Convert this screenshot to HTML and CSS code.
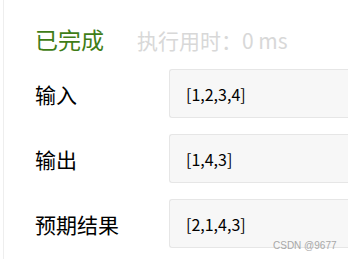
FILE: index.html
```html
<!DOCTYPE html>
<html lang="zh-CN">
<head>
<meta charset="utf-8">
<link rel="stylesheet" href="styles.css">
</head>
<body>
<div class="panel">
  <div class="header">
    <span class="status">已完成</span>
    <span class="time">执行用时：0 ms</span>
  </div>
  <div class="row">
    <div class="label">输入</div>
    <div class="box">[1,2,3,4]</div>
  </div>
  <div class="row">
    <div class="label">输出</div>
    <div class="box">[1,4,3]</div>
  </div>
  <div class="row">
    <div class="label">预期结果</div>
    <div class="box">[2,1,4,3]<span class="wm">CSDN @9677</span></div>
  </div>
</div>
</body>
</html>
```
FILE: styles.css
```css
html, body {
  margin: 0;
  padding: 0;
  background: #ffffff;
}
body {
  width: 348px;
  height: 259px;
  overflow: hidden;
  font-family: "Noto Sans CJK SC", "Noto Sans", sans-serif;
}
.panel {
  margin-left: 3px;
  border-left: 1px solid #eeeeee;
  height: 259px;
  padding: 24px 0 0 31px;
  box-sizing: border-box;
}
.header {
  display: flex;
  align-items: baseline;
  height: 36px;
  margin-bottom: 9px;
}
.status {
  font-size: 23px;
  color: #3f7d17;
  line-height: 30px;
}
.time {
  margin-left: 33px;
  font-size: 21px;
  color: #d8d8d8;
}
.row {
  display: flex;
  align-items: center;
  margin-bottom: 16px;
}
.label {
  width: 134px;
  font-size: 21px;
  color: #000;
}
.box {
  position: relative;
  flex: 1;
  height: 49px;
  box-sizing: border-box;
  border: 1px solid #e6e6e6;
  border-right: none;
  border-radius: 3px 0 0 3px;
  background: #f7f7f7;
  display: flex;
  align-items: center;
  padding-left: 16px;
  font-size: 16px;
  color: #000;
}
.wm {
  position: absolute;
  left: 103px;
  bottom: -4px;
  font-family: "Liberation Sans", Arial, sans-serif;
  font-size: 10px;
  color: #a8a8a8;
}
```
